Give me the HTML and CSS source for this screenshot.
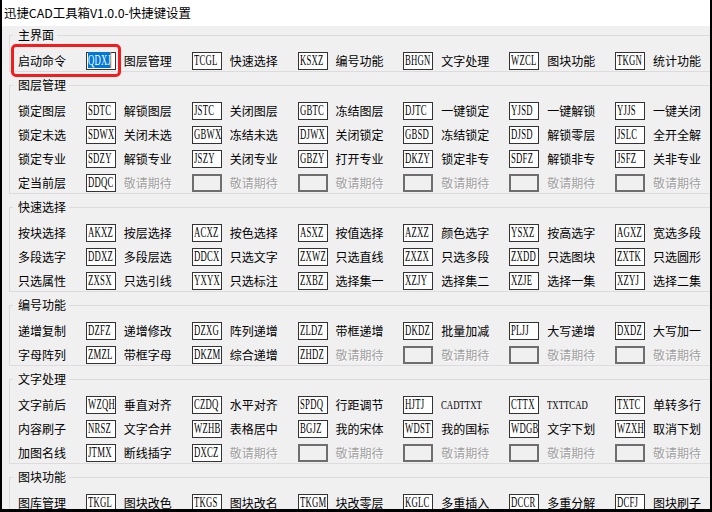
FILE: index.html
```html
<!DOCTYPE html>
<html lang="zh-CN">
<head>
<meta charset="utf-8">
<title>迅捷CAD工具箱V1.0.0-快捷键设置</title>
<link rel="stylesheet" href="styles.css">
</head>
<body>
<div class="app">
  <div class="titlebar">迅捷CAD工具箱V1.0.0-快捷键设置</div>

  <fieldset class="group">
    <legend>主界面</legend>
    <div class="rows">
      <div class="row">
        <div class="cell"><span class="lbl">启动命令</span><span class="key sel"><span class="code"><span class="hl">QDXJ</span></span></span></div>
        <div class="cell"><span class="lbl">图层管理</span><span class="key"><span class="code">TCGL</span></span></div>
        <div class="cell"><span class="lbl">快速选择</span><span class="key"><span class="code">KSXZ</span></span></div>
        <div class="cell"><span class="lbl">编号功能</span><span class="key"><span class="code">BHGN</span></span></div>
        <div class="cell"><span class="lbl">文字处理</span><span class="key"><span class="code">WZCL</span></span></div>
        <div class="cell"><span class="lbl">图块功能</span><span class="key"><span class="code">TKGN</span></span></div>
        <div class="cell"><span class="lbl">统计功能</span></div>
      </div>
    </div>
  </fieldset>

  <fieldset class="group">
    <legend>图层管理</legend>
    <div class="rows">
      <div class="row">
        <div class="cell"><span class="lbl">锁定图层</span><span class="key"><span class="code">SDTC</span></span></div>
        <div class="cell"><span class="lbl">解锁图层</span><span class="key"><span class="code">JSTC</span></span></div>
        <div class="cell"><span class="lbl">关闭图层</span><span class="key"><span class="code">GBTC</span></span></div>
        <div class="cell"><span class="lbl">冻结图层</span><span class="key"><span class="code">DJTC</span></span></div>
        <div class="cell"><span class="lbl">一键锁定</span><span class="key"><span class="code">YJSD</span></span></div>
        <div class="cell"><span class="lbl">一键解锁</span><span class="key"><span class="code">YJJS</span></span></div>
        <div class="cell"><span class="lbl">一键关闭</span></div>
      </div>
      <div class="row">
        <div class="cell"><span class="lbl">锁定未选</span><span class="key"><span class="code">SDWX</span></span></div>
        <div class="cell"><span class="lbl">关闭未选</span><span class="key"><span class="code">GBWX</span></span></div>
        <div class="cell"><span class="lbl">冻结未选</span><span class="key"><span class="code">DJWX</span></span></div>
        <div class="cell"><span class="lbl">关闭锁定</span><span class="key"><span class="code">GBSD</span></span></div>
        <div class="cell"><span class="lbl">冻结锁定</span><span class="key"><span class="code">DJSD</span></span></div>
        <div class="cell"><span class="lbl">解锁零层</span><span class="key"><span class="code">JSLC</span></span></div>
        <div class="cell"><span class="lbl">全开全解</span></div>
      </div>
      <div class="row">
        <div class="cell"><span class="lbl">锁定专业</span><span class="key"><span class="code">SDZY</span></span></div>
        <div class="cell"><span class="lbl">解锁专业</span><span class="key"><span class="code">JSZY</span></span></div>
        <div class="cell"><span class="lbl">关闭专业</span><span class="key"><span class="code">GBZY</span></span></div>
        <div class="cell"><span class="lbl">打开专业</span><span class="key"><span class="code">DKZY</span></span></div>
        <div class="cell"><span class="lbl">锁定非专</span><span class="key"><span class="code">SDFZ</span></span></div>
        <div class="cell"><span class="lbl">解锁非专</span><span class="key"><span class="code">JSFZ</span></span></div>
        <div class="cell"><span class="lbl">关非专业</span></div>
      </div>
      <div class="row">
        <div class="cell"><span class="lbl">定当前层</span><span class="key"><span class="code">DDQC</span></span></div>
        <div class="cell"><span class="lbl off">敬请期待</span><span class="key empty"></span></div>
        <div class="cell"><span class="lbl off">敬请期待</span><span class="key empty"></span></div>
        <div class="cell"><span class="lbl off">敬请期待</span><span class="key empty"></span></div>
        <div class="cell"><span class="lbl off">敬请期待</span><span class="key empty"></span></div>
        <div class="cell"><span class="lbl off">敬请期待</span><span class="key empty"></span></div>
        <div class="cell"><span class="lbl off">敬请期待</span></div>
      </div>
    </div>
  </fieldset>

  <fieldset class="group">
    <legend>快速选择</legend>
    <div class="rows">
      <div class="row">
        <div class="cell"><span class="lbl">按块选择</span><span class="key"><span class="code">AKXZ</span></span></div>
        <div class="cell"><span class="lbl">按层选择</span><span class="key"><span class="code">ACXZ</span></span></div>
        <div class="cell"><span class="lbl">按色选择</span><span class="key"><span class="code">ASXZ</span></span></div>
        <div class="cell"><span class="lbl">按值选择</span><span class="key"><span class="code">AZXZ</span></span></div>
        <div class="cell"><span class="lbl">颜色选字</span><span class="key"><span class="code">YSXZ</span></span></div>
        <div class="cell"><span class="lbl">按高选字</span><span class="key"><span class="code">AGXZ</span></span></div>
        <div class="cell"><span class="lbl">宽选多段</span></div>
      </div>
      <div class="row">
        <div class="cell"><span class="lbl">多段选字</span><span class="key"><span class="code">DDXZ</span></span></div>
        <div class="cell"><span class="lbl">多段层选</span><span class="key"><span class="code">DDCX</span></span></div>
        <div class="cell"><span class="lbl">只选文字</span><span class="key"><span class="code">ZXWZ</span></span></div>
        <div class="cell"><span class="lbl">只选直线</span><span class="key"><span class="code">ZXZX</span></span></div>
        <div class="cell"><span class="lbl">只选多段</span><span class="key"><span class="code">ZXDD</span></span></div>
        <div class="cell"><span class="lbl">只选图块</span><span class="key"><span class="code">ZXTK</span></span></div>
        <div class="cell"><span class="lbl">只选圆形</span></div>
      </div>
      <div class="row">
        <div class="cell"><span class="lbl">只选属性</span><span class="key"><span class="code">ZXSX</span></span></div>
        <div class="cell"><span class="lbl">只选引线</span><span class="key"><span class="code">YXYX</span></span></div>
        <div class="cell"><span class="lbl">只选标注</span><span class="key"><span class="code">ZXBZ</span></span></div>
        <div class="cell"><span class="lbl">选择集一</span><span class="key"><span class="code">XZJY</span></span></div>
        <div class="cell"><span class="lbl">选择集二</span><span class="key"><span class="code">XZJE</span></span></div>
        <div class="cell"><span class="lbl">选择一集</span><span class="key"><span class="code">XZYJ</span></span></div>
        <div class="cell"><span class="lbl">选择二集</span></div>
      </div>
    </div>
  </fieldset>

  <fieldset class="group">
    <legend>编号功能</legend>
    <div class="rows">
      <div class="row">
        <div class="cell"><span class="lbl">递增复制</span><span class="key"><span class="code">DZFZ</span></span></div>
        <div class="cell"><span class="lbl">递增修改</span><span class="key"><span class="code">DZXG</span></span></div>
        <div class="cell"><span class="lbl">阵列递增</span><span class="key"><span class="code">ZLDZ</span></span></div>
        <div class="cell"><span class="lbl">带框递增</span><span class="key"><span class="code">DKDZ</span></span></div>
        <div class="cell"><span class="lbl">批量加减</span><span class="key"><span class="code">PLJJ</span></span></div>
        <div class="cell"><span class="lbl">大写递增</span><span class="key"><span class="code">DXDZ</span></span></div>
        <div class="cell"><span class="lbl">大写加一</span></div>
      </div>
      <div class="row">
        <div class="cell"><span class="lbl">字母阵列</span><span class="key"><span class="code">ZMZL</span></span></div>
        <div class="cell"><span class="lbl">带框字母</span><span class="key"><span class="code">DKZM</span></span></div>
        <div class="cell"><span class="lbl">综合递增</span><span class="key"><span class="code">ZHDZ</span></span></div>
        <div class="cell"><span class="lbl off">敬请期待</span><span class="key empty"></span></div>
        <div class="cell"><span class="lbl off">敬请期待</span><span class="key empty"></span></div>
        <div class="cell"><span class="lbl off">敬请期待</span><span class="key empty"></span></div>
        <div class="cell"><span class="lbl off">敬请期待</span></div>
      </div>
    </div>
  </fieldset>

  <fieldset class="group">
    <legend>文字处理</legend>
    <div class="rows">
      <div class="row">
        <div class="cell"><span class="lbl">文字前后</span><span class="key"><span class="code">WZQH</span></span></div>
        <div class="cell"><span class="lbl">垂直对齐</span><span class="key"><span class="code">CZDQ</span></span></div>
        <div class="cell"><span class="lbl">水平对齐</span><span class="key"><span class="code">SPDQ</span></span></div>
        <div class="cell"><span class="lbl">行距调节</span><span class="key"><span class="code">HJTJ</span></span></div>
        <div class="cell"><span class="lbl"><span class="lat">CADTTXT</span></span><span class="key"><span class="code">CTTX</span></span></div>
        <div class="cell"><span class="lbl"><span class="lat">TXTTCAD</span></span><span class="key"><span class="code">TXTC</span></span></div>
        <div class="cell"><span class="lbl">单转多行</span></div>
      </div>
      <div class="row">
        <div class="cell"><span class="lbl">内容刷子</span><span class="key"><span class="code">NRSZ</span></span></div>
        <div class="cell"><span class="lbl">文字合并</span><span class="key"><span class="code">WZHB</span></span></div>
        <div class="cell"><span class="lbl">表格居中</span><span class="key"><span class="code">BGJZ</span></span></div>
        <div class="cell"><span class="lbl">我的宋体</span><span class="key"><span class="code">WDST</span></span></div>
        <div class="cell"><span class="lbl">我的国标</span><span class="key"><span class="code">WDGB</span></span></div>
        <div class="cell"><span class="lbl">文字下划</span><span class="key"><span class="code">WZXH</span></span></div>
        <div class="cell"><span class="lbl">取消下划</span></div>
      </div>
      <div class="row">
        <div class="cell"><span class="lbl">加图名线</span><span class="key"><span class="code">JTMX</span></span></div>
        <div class="cell"><span class="lbl">断线插字</span><span class="key"><span class="code">DXCZ</span></span></div>
        <div class="cell"><span class="lbl off">敬请期待</span><span class="key empty"></span></div>
        <div class="cell"><span class="lbl off">敬请期待</span><span class="key empty"></span></div>
        <div class="cell"><span class="lbl off">敬请期待</span><span class="key empty"></span></div>
        <div class="cell"><span class="lbl off">敬请期待</span><span class="key empty"></span></div>
        <div class="cell"><span class="lbl off">敬请期待</span></div>
      </div>
    </div>
  </fieldset>

  <fieldset class="group">
    <legend>图块功能</legend>
    <div class="rows">
      <div class="row">
        <div class="cell"><span class="lbl">图库管理</span><span class="key"><span class="code">TKGL</span></span></div>
        <div class="cell"><span class="lbl">图块改色</span><span class="key"><span class="code">TKGS</span></span></div>
        <div class="cell"><span class="lbl">图块改名</span><span class="key"><span class="code">TKGM</span></span></div>
        <div class="cell"><span class="lbl">块改零层</span><span class="key"><span class="code">KGLC</span></span></div>
        <div class="cell"><span class="lbl">多重插入</span><span class="key"><span class="code">DCCR</span></span></div>
        <div class="cell"><span class="lbl">多重分解</span><span class="key"><span class="code">DCFJ</span></span></div>
        <div class="cell"><span class="lbl">图块刷子</span></div>
      </div>
    </div>
  </fieldset>

  <div class="mark"></div>
</div>
</body>
</html>
```

FILE: styles.css
```css
html, body {
  margin: 0;
  padding: 0;
  background: #000;
}

.app {
  position: relative;
  width: 712px;
  height: 512px;
  box-sizing: border-box;
  border-style: solid;
  border-color: #000;
  border-width: 0 2px 3px 2px;
  background: #f0f0f0;
  overflow: hidden;
  font-family: "Noto Sans CJK SC", "Noto Sans", sans-serif;
  font-size: 12px;
  color: #000;
}

.titlebar {
  height: 26px;
  line-height: 26px;
  background: #fff;
  padding-left: 2px;
  font-size: 12.4px;
  white-space: nowrap;
}

.group {
  margin: 1px 0 5px 7px;
  padding: 0 0 1.5px 8px;
  border: 1px solid #dcdcdc;
  width: 760px;
  min-width: 0;
  box-sizing: border-box;
}

.group legend {
  padding: 0 3px 0 5px;
  margin-left: -5px;
  height: 16px;
  line-height: 16px;
}

.rows {
  padding-top: 8.5px;
  display: grid;
  row-gap: 6px;
}

.row {
  display: flex;
  height: 18px;
}

.cell {
  flex: 0 0 105.833px;
  display: flex;
  align-items: center;
}

.lbl {
  flex: none;
  width: 68px;
  line-height: 18px;
  white-space: nowrap;
}

.lbl.off {
  color: #a0a0a0;
  text-shadow: 1px 1px 0 #fff;
}

.lat {
  display: inline-block;
  font-family: "Liberation Serif", serif;
  font-size: 12.5px;
  transform: scaleX(0.7);
  transform-origin: 0 50%;
}

.key {
  flex: none;
  width: 30px;
  height: 18px;
  box-sizing: border-box;
  border: 1px solid #333;
  background: #fff;
  display: flex;
  align-items: center;
  padding-left: 1px;
}

.key.empty {
  border: 2px solid #6e6e6e;
  background: #f0f0f0;
}

.code {
  flex: none;
  display: inline-block;
  font-family: "Liberation Serif", serif;
  font-size: 15px;
  line-height: 15px;
  letter-spacing: 0.4px;
  white-space: nowrap;
  transform: scaleX(0.58);
  transform-origin: 0 50%;
}

.hl {
  background: #0078d7;
  color: #fff;
  box-shadow: inset -1.7px 0 #ff8728;
}

.mark {
  position: absolute;
  left: 9px;
  top: 44px;
  width: 110px;
  height: 33px;
  box-sizing: border-box;
  border: 3px solid #f41d1d;
  border-radius: 5px;
}
```
